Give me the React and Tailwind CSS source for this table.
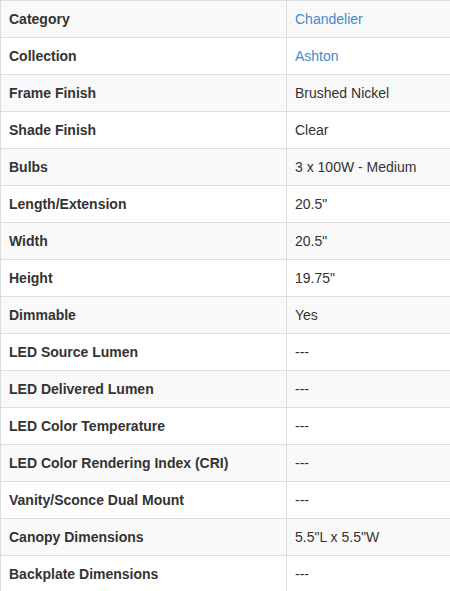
import React from "react";

const rows = [
  ["Category", "Chandelier", true],
  ["Collection", "Ashton", true],
  ["Frame Finish", "Brushed Nickel"],
  ["Shade Finish", "Clear"],
  ["Bulbs", "3 x 100W - Medium"],
  ["Length/Extension", "20.5\""],
  ["Width", "20.5\""],
  ["Height", "19.75\""],
  ["Dimmable", "Yes"],
  ["LED Source Lumen", "---"],
  ["LED Delivered Lumen", "---"],
  ["LED Color Temperature", "---"],
  ["LED Color Rendering Index (CRI)", "---"],
  ["Vanity/Sconce Dual Mount", "---"],
  ["Canopy Dimensions", "5.5\"L x 5.5\"W"],
  ["Backplate Dimensions", "---"],
];

export default function App() {
  return (
    <div className="w-[450px] overflow-hidden bg-white" style={{ fontFamily: '"Liberation Sans", Arial, sans-serif' }}>
      <table className="w-[452px] border-collapse border border-[#dddddd] text-[14px] leading-[20px] text-[#333333]">
        <tbody>
          {rows.map(([k, v, link], i) => (
            <tr key={k} className={i % 2 === 0 ? "bg-[#f9f9f9]" : "bg-white"}>
              <td className="w-[286px] border border-[#dddddd] px-2 py-2 text-left font-bold align-top">{k}</td>
              <td className="border border-[#dddddd] px-2 py-2 text-left align-top">
                {link ? <span className="text-[#428bca]">{v}</span> : v}
              </td>
            </tr>
          ))}
        </tbody>
      </table>
    </div>
  );
}
